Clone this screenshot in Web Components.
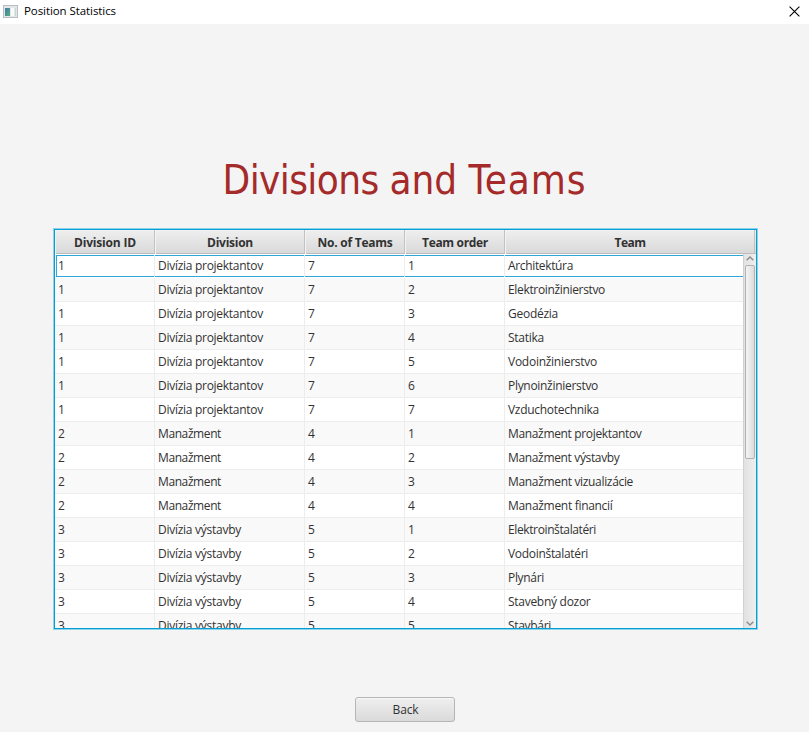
<!DOCTYPE html>
<html lang="sk">
<head>
<meta charset="utf-8">
<title>Position Statistics</title>
<style>
body{margin:0;background:#f4f4f4;font-family:"Open Sans","Noto Sans",sans-serif;overflow:hidden}
</style>
</head>
<body>
<app-window></app-window>
<script>
// Text run whose tracking is adjusted so that it spans a given width.
class FitText extends HTMLElement {
  connectedCallback() {
    const r = this.attachShadow({ mode: 'open' });
    r.innerHTML = `<style>:host{display:inline-block;white-space:pre}span{display:inline-block}</style><span><slot></slot></span>`;
    const w = parseFloat(this.getAttribute('width'));
    if (!w) return;
    const span = r.querySelector('span');
    const n = this.textContent.length;
    const natural = span.getBoundingClientRect().width;
    span.style.letterSpacing = ((w - natural) / n) + 'px';
  }
}
class TitleBar extends HTMLElement {
  connectedCallback() {
    this.attachShadow({ mode: 'open' }).innerHTML = `<style>
      :host{display:flex;align-items:center;height:24px;background:#fff;box-sizing:border-box;padding:0 9px 2px 3px;font-size:11.5px;line-height:22px;color:#000}
      .name{margin-left:6px;flex:1;display:flex}
      svg{display:block}
    </style>
    <svg width="15" height="13" viewBox="0 0 15 13" shape-rendering="crispEdges">
      <defs><linearGradient id="g" x1="0" y1="0" x2="1" y2="1"><stop offset="0" stop-color="#4478ac"/><stop offset="1" stop-color="#4fb07c"/></linearGradient></defs>
      <rect x=".5" y=".5" width="14" height="12" fill="#e4e7ea" stroke="#b9bcc0"/>
      <rect x="2" y="3" width="5" height="8" fill="url(#g)"/>
      <rect x="8" y="3" width="3" height="8" fill="#fafafa"/><rect x="12" y="3" width="1" height="8" fill="#c3dcd0"/>
    </svg>
    <div class="name"><slot></slot></div>
    <svg width="11" height="11" viewBox="0 0 11 11"><path d="M.6 .6 10.4 10.4M10.4 .6 .6 10.4" stroke="#000" stroke-width="1.1"/></svg>`;
  }
}
class DataTable extends HTMLElement {
  connectedCallback() {
    const cols = [['Division ID',62],['Division',46],['No. of Teams',75],['Team order',66],['Team',31]];
    const P = ['Divízia projektantov',105], M = ['Manažment',63], V = ['Divízia výstavby',83];
    const rows = [
      [1,P,7,1,['Architektúra',65]],[1,P,7,2,['Elektroinžinierstvo',97]],[1,P,7,3,['Geodézia',50]],
      [1,P,7,4,['Statika',36]],[1,P,7,5,['Vodoinžinierstvo',89]],[1,P,7,6,['Plynoinžinierstvo',90]],
      [1,P,7,7,['Vzduchotechnika',91]],[2,M,4,1,['Manažment projektantov',133.5]],
      [2,M,4,2,['Manažment výstavby',111.5]],[2,M,4,3,['Manažment vizualizácie',125]],
      [2,M,4,4,['Manažment financií',104.5]],[3,V,5,1,['Elektroinštalatéri',88]],
      [3,V,5,2,['Vodoinštalatéri',80]],[3,V,5,3,['Plynári',36]],[3,V,5,4,['Stavebný dozor',82.5]],
      [3,V,5,5,['Stavbári',43]]];
    const cell = c => Array.isArray(c) ? `<fit-text width="${c[1]}">${c[0]}</fit-text>` : `<fit-text width="6.5">${c}</fit-text>`;
    this.attachShadow({ mode: 'open' }).innerHTML = `<style>
      :host{display:flex;flex-direction:column;box-sizing:border-box;width:703px;height:400px;border:1px solid #039ed3;box-shadow:0 0 0 1px #8fd2ea;background:#fff;overflow:hidden;color:#323232;font-size:12px}
      .head,.row{display:grid;grid-template-columns:100px 150px 100px 100px 1fr}
      .head{flex:none;height:24px;padding-right:1px;font-weight:700;background:linear-gradient(#efefef,#d9d9d9);border-bottom:1px solid #bdbdbd;box-sizing:border-box}
      .head div{display:flex;justify-content:center;line-height:25px;border-right:1px solid #c2c2c2;box-shadow:inset 1px 1px #f4f4f4;padding-left:1px}
      .body{display:flex;flex:1;min-height:0}
      .rows{width:688px;flex:none;overflow:hidden}
      .row{height:24px;box-sizing:border-box;border-bottom:1px solid #ededed;background:#fff}
      .row:nth-child(even){background:#f9f9f9}
      .row div{padding-left:3px;line-height:23px;border-right:1px solid #ededed}
      .row div:last-child{border-right:0}
      .row:first-child{border-bottom:0;padding:1px 0}
      .row:first-child div{height:22px;box-sizing:border-box;line-height:20px;border-top:1px solid #2fa7d8;border-bottom:1px solid #2fa7d8;background:#fff;border-right:0;margin-right:1px;box-shadow:1px 0 #ededed}
      .row:first-child div:first-child{margin-left:1px;border-left:1px solid #2fa7d8;padding-left:1px}
      .row:first-child div:last-child{margin-right:0;box-shadow:none}
      scroll-rail{flex:1}
    </style>
    <div class="head">${cols.map(c => `<div>${cell(c)}</div>`).join('')}</div>
    <div class="body"><div class="rows">${rows.map(r => `<div class="row">${r.map(c => `<div>${cell(c)}</div>`).join('')}</div>`).join('')}</div><scroll-rail></scroll-rail></div>`;
  }
}
class ScrollRail extends HTMLElement {
  connectedCallback() {
    this.attachShadow({ mode: 'open' }).innerHTML = `<style>
      :host{display:flex;flex-direction:column;align-items:center;box-sizing:border-box;border-left:1px solid #d2d2d2;background:linear-gradient(90deg,#e2e2e2,#eee)}
      .thumb{box-sizing:border-box;width:10px;height:194px;border:1px solid #b2b2b2;border-radius:2px;background:linear-gradient(90deg,#f4f4f4,#dcdcdc)}
      .gap{flex:1} svg{display:block;flex:none} .up{margin:2px 0 4px} .down{margin-bottom:2px}
    </style>
    <svg class="up" width="8" height="5"><path d="M.7 4.3 4 1 7.3 4.3" fill="none" stroke="#8b8b8b" stroke-width="1.4"/></svg>
    <div class="thumb"></div><div class="gap"></div>
    <svg class="down" width="8" height="5"><path d="M.7 .7 4 4 7.3 .7" fill="none" stroke="#8b8b8b" stroke-width="1.4"/></svg>`;
  }
}
class PushButton extends HTMLElement {
  connectedCallback() {
    this.attachShadow({ mode: 'open' }).innerHTML = `<style>
      :host{display:block;width:100px;height:25px}
      button{display:flex;align-items:center;justify-content:center;width:100%;height:100%;padding:0 0 1px 1px;border:1px solid #b5b5b5;border-radius:3px;background:linear-gradient(#efefef,#dadada);box-shadow:inset 0 1px #f8f8f8;font:12px "Open Sans",sans-serif;color:#323232}
    </style><button><slot></slot></button>`;
  }
}
class AppWindow extends HTMLElement {
  connectedCallback() {
    this.attachShadow({ mode: 'open' }).innerHTML = `<style>
      :host{display:flex;flex-direction:column;width:809px;height:732px;background:#f4f4f4;overflow:hidden}
      title-bar{flex:none}
      main{display:flex;flex-direction:column;align-items:center;padding-top:132px}
      h1{margin:0;height:73px;line-height:48px;font-family:"DejaVu Sans Condensed","DejaVu Sans",sans-serif;font-stretch:condensed;font-size:40px;font-weight:400;color:#a52a2a;white-space:nowrap}
      data-table{margin-left:2px}
      push-button{margin:68px 0 0 1px}
    </style>
    <title-bar><fit-text width="92">Position Statistics</fit-text></title-bar>
    <main><h1><fit-text width="167">Divisions </fit-text><fit-text width="79">and </fit-text><fit-text width="118">Teams</fit-text></h1>
    <data-table></data-table>
    <push-button><fit-text width="26">Back</fit-text></push-button></main>`;
  }
}
customElements.define('fit-text', FitText);
customElements.define('title-bar', TitleBar);
customElements.define('scroll-rail', ScrollRail);
customElements.define('data-table', DataTable);
customElements.define('push-button', PushButton);
customElements.define('app-window', AppWindow);
</script>
</body>
</html>
